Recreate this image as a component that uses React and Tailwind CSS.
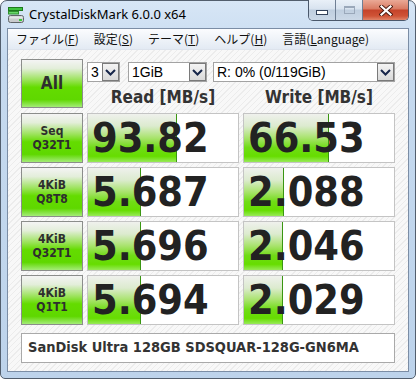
import React from 'react';

// CrystalDiskMark window, Win7 Aero frame

const rows = [
  { l1: 'Seq', l2: 'Q32T1', read: '93.82', write: '66.53' },
  { l1: '4KiB', l2: 'Q8T8', read: '5.687', write: '2.088' },
  { l1: '4KiB', l2: 'Q32T1', read: '5.696', write: '2.046' },
  { l1: '4KiB', l2: 'Q1T1', read: '5.694', write: '2.029' },
];

// CDM meter is log scaled: log10(MB/s * 10) / 5
const meter = (v) => Math.min(100, (Math.log10(parseFloat(v) * 10) / 5) * 100);

const DiskIcon = () => (
  <svg width="16" height="16" viewBox="0 0 16 16" className="shrink-0">
    <rect x="0.5" y="0.5" width="14" height="3" fill="#3ec23e" stroke="#1d7a1d" />
    <rect x="0.5" y="4.5" width="10" height="2.5" fill="#69d869" stroke="#2f8f2f" />
    <rect x="0.5" y="8.5" width="15" height="7" rx="2" fill="#c9cbcd" stroke="#5f6468" />
    <rect x="1.5" y="9.5" width="13" height="2" fill="#e4e6e8" />
    <rect x="11" y="12" width="3" height="2" fill="#38cc38" />
  </svg>
);

const Chevron = () => (
  <svg width="11" height="7" viewBox="0 0 11 7">
    <path d="M1 1 L5.5 5.5 L10 1" fill="none" stroke="#17264a" strokeWidth="2" />
  </svg>
);

function Select({ className, text }) {
  return (
    <div className={`${className} h-[20px] flex items-center border border-[#a3a3a3] bg-white`}>
      <span className="flex-1 pl-[3px] text-[14px] leading-none text-black font-['Liberation_Sans',Arial,sans-serif]">
        {text}
      </span>
      <div className="w-[17px] h-[18px] border border-[#7a7a7a] bg-[linear-gradient(180deg,#f4f4f4,#d9d9d9)] flex items-center justify-center">
        <Chevron />
      </div>
    </div>
  );
}

function CaptionButtons() {
  return (
    <div className="ml-auto mr-[6px] self-start -mt-px flex h-[21px] border border-t-0 border-[#4a586b] rounded-b-[5px] overflow-hidden">
      <div className="w-[27px] h-full border-r border-[#6f7f94] bg-[linear-gradient(180deg,#e9f0f8_0%,#d8e3ef_45%,#bfcedf_50%,#cbd8e7_100%)] flex justify-center pt-[10px]">
        <div className="w-[12px] h-[5px] bg-white border border-[#34425a]" />
      </div>
      <div className="w-[27px] h-full border-r border-[#6f7f94] bg-[linear-gradient(180deg,#e9f0f8_0%,#d8e3ef_45%,#bfcedf_50%,#cbd8e7_100%)] flex justify-center pt-[6px]">
        <div className="w-[11px] h-[8px] border border-t-2 border-[#9aa8ba]" />
      </div>
      <div className="w-[45px] h-full bg-[linear-gradient(180deg,#eaa996_0%,#d97a62_45%,#c5432a_50%,#cf5336_80%,#e08468_100%)] flex justify-center items-center">
        <svg width="14" height="11" viewBox="0 0 14 11">
          <path d="M2.5 1.5 L11.5 9.5 M11.5 1.5 L2.5 9.5" stroke="#4a1a10" strokeWidth="4" strokeLinecap="square" />
          <path d="M2.5 1.5 L11.5 9.5 M11.5 1.5 L2.5 9.5" stroke="#ffffff" strokeWidth="2.2" strokeLinecap="square" />
        </svg>
      </div>
    </div>
  );
}

function TestButton({ children, className = 'h-[50px]' }) {
  return (
    <div className={`${className} w-[62px] shrink-0 border border-[#8b8d8b] bg-[linear-gradient(180deg,#f4f4f4_0%,#e3eeda_18%,#9ce35c_42%,#64dc00_58%,#5fd800_84%,#a4ec78_100%)] flex flex-col items-center justify-center text-[#2e2e2e] font-bold font-['DejaVu_Sans_Condensed','DejaVu_Sans',sans-serif]`}>
      {children}
    </div>
  );
}

function Cell({ value }) {
  return (
    <div className="relative w-[152px] h-[50px] shrink-0 border border-[#c4c4c4] bg-white flex items-center pl-[4px]">
      <div
        className="absolute left-0 top-0 bottom-0 border-r border-[#3a9612] bg-[linear-gradient(180deg,#eff1ed_0%,#dcebcf_25%,#a8e36c_50%,#70dc16_70%,#66dd00_88%,#98ea58_100%)]"
        style={{ width: `${meter(value)}%` }}
      />
      <span className="relative text-[41px] leading-none font-bold text-[#222] font-['DejaVu_Sans_Condensed','DejaVu_Sans',sans-serif]">
        {value}
      </span>
    </div>
  );
}

export default function App() {
  return (
    <div className="w-[416px] h-[379px] bg-white">
      <div className="w-[416px] h-[379px] flex flex-col border border-[#525e6d] rounded-t-[7px] rounded-b-[5px] bg-[linear-gradient(180deg,#d7e6f6_0%,#c6daef_15%,#bdd3eb_100%)]">
        {/* Title bar */}
        <div className="h-[27px] shrink-0 flex items-center pl-[7px]">
          <DiskIcon />
          <span className="ml-[5px] text-[13px] text-black font-['Noto_Sans',sans-serif]">
            CrystalDiskMark 6.0.0 x64
          </span>
          <CaptionButtons />
        </div>

        {/* Client area */}
        <div className="flex-1 mx-[6px] mb-[6px] border border-[#7b8da5] flex flex-col">
          {/* Menu */}
          <div className="h-[21px] shrink-0 border-b border-[#dde3ec] bg-[linear-gradient(180deg,#fbfcfe,#e3eaf3)] flex items-center pl-[8px] gap-[15px] text-[12px] text-[#111] font-['Noto_Sans_CJK_JP',sans-serif]">
            <span>ファイル(<span className="underline">F</span>)</span>
            <span>設定(<span className="underline">S</span>)</span>
            <span>テーマ(<span className="underline">T</span>)</span>
            <span>ヘルプ(<span className="underline">H</span>)</span>
            <span>言語(<span className="underline">L</span>anguage)</span>
          </div>

          {/* Main */}
          <div className="flex-1 pt-[9px] pl-[13px] bg-[repeating-linear-gradient(135deg,#f8f8f8_0px,#f8f8f8_3px,#ececec_3px,#ececec_4px)]">
            <div className="flex gap-[4px]">
              <TestButton className="h-[49px]">
                <span className="text-[17px] leading-none">All</span>
              </TestButton>
              <div className="w-[308px] flex flex-col">
                <div className="flex mt-[3px]">
                  <Select className="w-[33px]" text="3" />
                  <Select className="w-[79px] ml-[8px]" text="1GiB" />
                  <Select className="w-[182px] ml-[6px]" text="R: 0% (0/119GiB)" />
                </div>
                <div className="flex h-[20px] mt-[6px] text-[17px] font-bold text-[#333] font-['DejaVu_Sans_Condensed','DejaVu_Sans',sans-serif]">
                  <div className="w-[152px] flex items-center justify-center">Read [MB/s]</div>
                  <div className="w-[152px] ml-[4px] flex items-center justify-center">Write [MB/s]</div>
                </div>
              </div>
            </div>

            <div className="flex flex-col gap-[4px] mt-[5px]">
              {rows.map((r) => (
                <div key={r.l1 + r.l2} className="flex gap-[4px]">
                  <TestButton>
                    <span className="text-[12px] leading-[14px]">{r.l1}</span>
                    <span className="text-[12px] leading-[14px]">{r.l2}</span>
                  </TestButton>
                  <Cell value={r.read} />
                  <Cell value={r.write} />
                </div>
              ))}
            </div>

            <div className="mt-[8px] w-[374px] h-[30px] border border-[#a9a9a9] bg-white flex items-center pl-[6px] text-[14.5px] font-bold text-[#333] font-['DejaVu_Sans_Condensed','DejaVu_Sans',sans-serif]">
              SanDisk Ultra 128GB SDSQUAR-128G-GN6MA
            </div>
          </div>
        </div>
      </div>
    </div>
  );
}
